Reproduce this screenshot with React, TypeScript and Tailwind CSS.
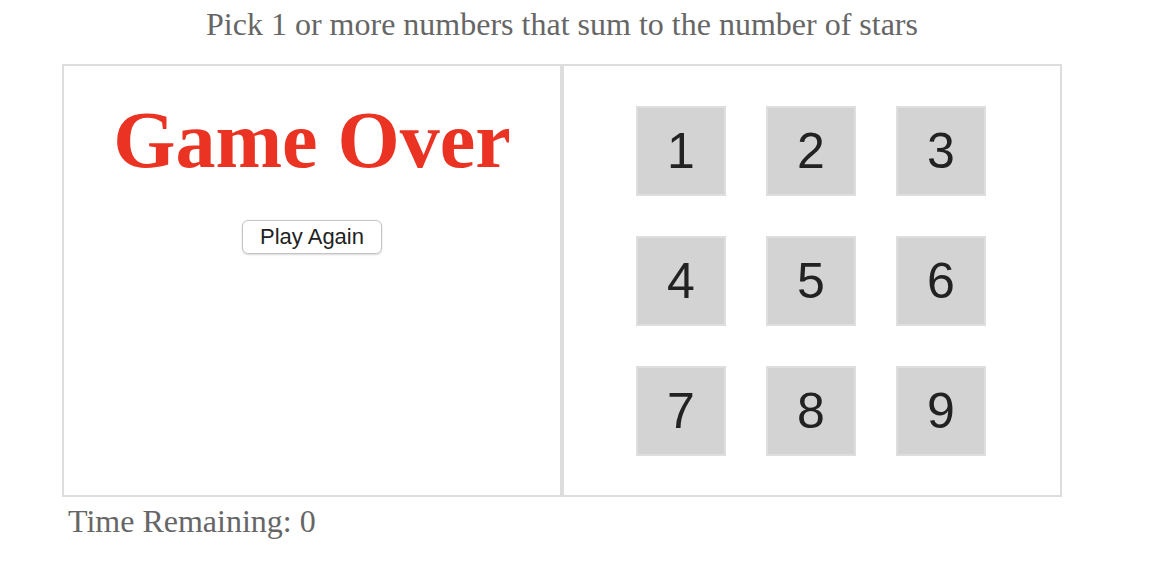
import React from "react";

export default function App() {
  const nums = [1, 2, 3, 4, 5, 6, 7, 8, 9];
  return (
    <div className="min-h-[576px] w-[1150px] bg-white">
      <div className="ml-[62px] w-[1000px]">
        <div className="pt-[8px] text-center font-['Liberation_Serif',serif] text-[32px] leading-[32px] text-[#666666]">
          Pick 1 or more numbers that sum to the number of stars
        </div>
        <div className="mt-[24px] flex h-[433px]">
          <div className="flex w-[500px] flex-col items-center border-2 border-[#dddddd]">
            <div className="mt-[34px] font-['Liberation_Serif',serif] text-[80px] font-bold leading-[80px] text-[#ea3323]">
              Game Over
            </div>
            <button className="mt-[40px] flex h-[34px] items-center rounded-[6px] border border-[#c4c4c4] bg-white px-[17px] font-['Liberation_Sans',Arial,sans-serif] text-[22px] leading-none text-[#222222] shadow-[0_1px_2px_rgba(0,0,0,0.15)]">
              Play Again
            </button>
          </div>
          <div className="w-[500px] border-2 border-[#dddddd] pt-[40px]">
            <div className="ml-[72px] grid w-[350px] grid-cols-[90px_90px_90px] gap-[40px]">
              {nums.map((n) => (
                <button
                  key={n}
                  className="flex h-[90px] w-[90px] items-center justify-center border-2 border-[#dedede] bg-[#d3d3d3] font-['Liberation_Sans',Arial,sans-serif] text-[50px] leading-none text-[#222222]"
                >
                  {n}
                </button>
              ))}
            </div>
          </div>
        </div>
        <div className="ml-[6px] mt-[8px] font-['Liberation_Serif',serif] text-[32px] leading-[32px] text-[#666666]">
          Time Remaining: 0
        </div>
      </div>
    </div>
  );
}
